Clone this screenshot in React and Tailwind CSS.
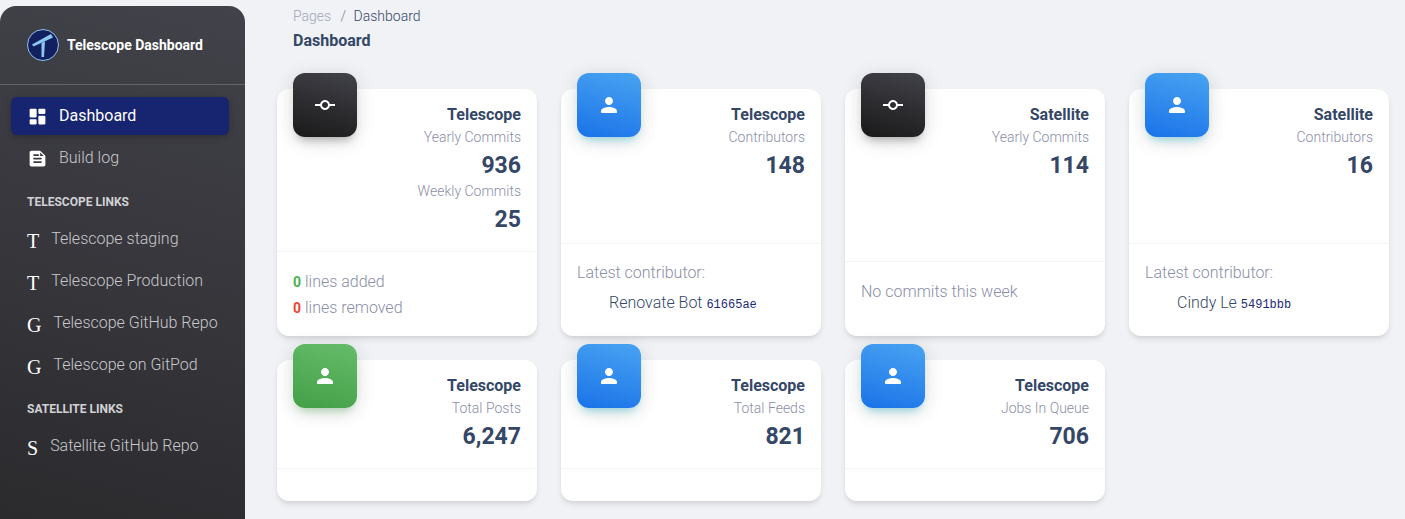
const ICONS = {
  dashboard:
    "M4 13h6c.55 0 1-.45 1-1V4c0-.55-.45-1-1-1H4c-.55 0-1 .45-1 1v8c0 .55.45 1 1 1zm0 8h6c.55 0 1-.45 1-1v-4c0-.55-.45-1-1-1H4c-.55 0-1 .45-1 1v4c0 .55.45 1 1 1zm10 0h6c.55 0 1-.45 1-1v-8c0-.55-.45-1-1-1h-6c-.55 0-1 .45-1 1v8c0 .55.45 1 1 1zM13 4v4c0 .55.45 1 1 1h6c.55 0 1-.45 1-1V4c0-.55-.45-1-1-1h-6c-.55 0-1 .45-1 1z",
  feed:
    "M15.59 3.59c-.38-.38-.89-.59-1.42-.59H5c-1.1 0-2 .9-2 2v14c0 1.1.9 2 2 2h14c1.1 0 2-.9 2-2V9.83c0-.53-.21-1.04-.59-1.41l-4.82-4.83zM8 7h5c.55 0 1 .45 1 1s-.45 1-1 1H8c-.55 0-1-.45-1-1s.45-1 1-1zm8 10H8c-.55 0-1-.45-1-1s.45-1 1-1h8c.55 0 1 .45 1 1s-.45 1-1 1zm0-4H8c-.55 0-1-.45-1-1s.45-1 1-1h8c.55 0 1 .45 1 1s-.45 1-1 1zm-1-4V5l4 4h-4z",
  person:
    "M12 12c2.21 0 4-1.79 4-4s-1.79-4-4-4-4 1.79-4 4 1.79 4 4 4zm0 2c-2.67 0-8 1.34-8 4v1c0 .55.45 1 1 1h14c.55 0 1-.45 1-1v-1c0-2.66-5.33-4-8-4z",
  commit:
    "M16.9 11c-.46-2.28-2.48-4-4.9-4s-4.44 1.72-4.9 4H2v2h5.1c.46 2.28 2.48 4 4.9 4s4.44-1.72 4.9-4H22v-2h-5.1zM12 15c-1.66 0-3-1.34-3-3s1.34-3 3-3 3 1.34 3 3-1.34 3-3 3z",
};

const BADGES = {
  dark: "bg-[linear-gradient(195deg,#42424a,#191919)] shadow-[0_4px_20px_rgba(0,0,0,0.14),0_7px_10px_-5px_rgba(64,64,64,0.4)]",
  blue: "bg-[linear-gradient(195deg,#49a3f1,#1a73e8)] shadow-[0_4px_20px_rgba(0,0,0,0.14),0_7px_10px_-5px_rgba(0,187,212,0.4)]",
  green: "bg-[linear-gradient(195deg,#66bb6a,#43a047)] shadow-[0_4px_20px_rgba(0,0,0,0.14),0_7px_10px_-5px_rgba(76,175,80,0.4)]",
};

const Icon = ({ name, size = 24, className = "" }) => (
  <svg viewBox="0 0 24 24" width={size} height={size} fill="currentColor" className={className}>
    <path d={ICONS[name]} />
  </svg>
);

const Logo = () => (
  <svg viewBox="0 0 32 32" width="32" height="32" className="shrink-0">
    <circle cx="16" cy="16" r="15.5" fill="#13205f" stroke="#8fc4ee" strokeWidth="1" />
    <path d="M5 15.5 L24 5 L26 8.5 L6.5 17.5 Z" fill="#8cc8f2" />
    <path d="M14.5 14 L18 12.5 L17 28 L14.5 28 Z" fill="#8cc8f2" />
  </svg>
);

const NavLink = ({ letter, label }) => (
  <a className="h-[38px] mb-1 px-4 flex items-center text-[#c9c9cd] font-light">
    <span className="font-['Liberation_Serif'] text-xl text-white mt-1 mr-3">{letter}</span>
    <span>{label}</span>
  </a>
);

const Sidebar = () => (
  <aside className="w-[245px] h-[513px] mt-1.5 shrink-0 overflow-hidden rounded-t-2xl bg-[linear-gradient(195deg,#42424a,#2b2b2e)]">
    <div className="h-[79px] pl-[27px] flex items-center gap-2 border-b border-white/20">
      <Logo />
      <span className="text-sm font-bold text-white">Telescope Dashboard</span>
    </div>
    <nav className="pl-[11px] pr-4 pt-3">
      <a className="h-[38px] pl-4 flex items-center gap-[11px] rounded-md text-white font-normal bg-[#17246f] shadow-[0_2px_6px_rgba(0,0,0,0.25)]">
        <Icon name="dashboard" size={21} />
        <span>Dashboard</span>
      </a>
      <a className="h-[38px] mt-1 pl-4 flex items-center gap-[11px] text-[#c9c9cd] font-light">
        <Icon name="feed" size={21} className="text-white" />
        <span>Build log</span>
      </a>
    </nav>
    <h6 className="pl-[27px] mt-4 mb-[9px] text-xs leading-[18px] font-bold text-[#d2d2d6]">TELESCOPE LINKS</h6>
    <div className="px-[11px]">
      <NavLink letter="T" label="Telescope staging" />
      <NavLink letter="T" label="Telescope Production" />
      <NavLink letter="G" label="Telescope GitHub Repo" />
      <NavLink letter="G" label="Telescope on GitPod" />
    </div>
    <h6 className="pl-[27px] mt-4 mb-[9px] text-xs leading-[18px] font-bold text-[#d2d2d6]">SATELLITE LINKS</h6>
    <div className="px-[11px]">
      <NavLink letter="S" label="Satellite GitHub Repo" />
    </div>
  </aside>
);

const Metric = ({ label, value }) => (
  <>
    <p className="text-sm leading-[21px] font-light text-[#8a8ea8]">{label}</p>
    <p className="pt-0.5 text-[23px] leading-[31px] font-bold text-[#344767]">{value}</p>
  </>
);

const StatCard = ({ icon, color, title, metrics, children }) => (
  <div className="relative flex flex-col rounded-xl bg-white shadow-[0_4px_6px_-1px_rgba(0,0,0,0.1),0_2px_4px_-1px_rgba(0,0,0,0.06)]">
    <div className={`absolute -top-4 left-4 w-16 h-16 rounded-xl flex items-center justify-center text-white ${BADGES[color]}`}>
      <Icon name={icon} />
    </div>
    <div className="flex-1 pt-[13px] px-4 pb-4 text-right">
      <p className="leading-[25px] font-bold text-[#344767]">{title}</p>
      {metrics.map((m) => (
        <Metric key={m.label} label={m.label} value={m.value} />
      ))}
    </div>
    <div className="border-t border-[#f3f3f5] px-4 pt-[17px] pb-[15px] font-light text-[#8a8ea8] leading-[26px]">{children}</div>
  </div>
);

const Contributor = ({ name, sha }) => (
  <>
    <p className="-mt-px">Latest contributor:</p>
    <p className="pl-8 mt-1 mb-[5px] text-[#344767]">
      {name} <code className="font-['Liberation_Mono'] text-xs font-normal text-[#1c2a78]">{sha}</code>
    </p>
  </>
);

export default function App() {
  return (
    <div className="flex h-screen overflow-hidden bg-[#f0f2f5] font-['Roboto',sans-serif]">
      <Sidebar />
      <main className="flex-1 pl-8 pr-4">
        <div className="pl-4 pt-1.5">
          <p className="text-sm leading-[21px] font-light text-[#a0a6b8]">
            Pages <span className="ml-1.5 mr-1 text-[#7b809a]">/</span> <span className="text-[#344767]">Dashboard</span>
          </p>
          <h1 className="mt-[1px] leading-[26px] font-bold text-[#344767]">Dashboard</h1>
        </div>
        <div className="grid grid-cols-4 gap-6 mt-[35px]">
          <StatCard
            icon="commit"
            color="dark"
            title="Telescope"
            metrics={[
              { label: "Yearly Commits", value: "936" },
              { label: "Weekly Commits", value: "25" },
            ]}
          >
            <p>
              <span className="text-sm font-bold text-[#4caf50]">0</span> lines added
            </p>
            <p>
              <span className="text-sm font-bold text-[#f44336]">0</span> lines removed
            </p>
          </StatCard>
          <StatCard icon="person" color="blue" title="Telescope" metrics={[{ label: "Contributors", value: "148" }]}>
            <Contributor name="Renovate Bot" sha="61665ae" />
          </StatCard>
          <StatCard icon="commit" color="dark" title="Satellite" metrics={[{ label: "Yearly Commits", value: "114" }]}>
            <p className="mb-4">No commits this week</p>
          </StatCard>
          <StatCard icon="person" color="blue" title="Satellite" metrics={[{ label: "Contributors", value: "16" }]}>
            <Contributor name="Cindy Le" sha="5491bbb" />
          </StatCard>
          <StatCard icon="person" color="green" title="Telescope" metrics={[{ label: "Total Posts", value: "6,247" }]} />
          <StatCard icon="person" color="blue" title="Telescope" metrics={[{ label: "Total Feeds", value: "821" }]} />
          <StatCard icon="person" color="blue" title="Telescope" metrics={[{ label: "Jobs In Queue", value: "706" }]} />
        </div>
      </main>
    </div>
  );
}
